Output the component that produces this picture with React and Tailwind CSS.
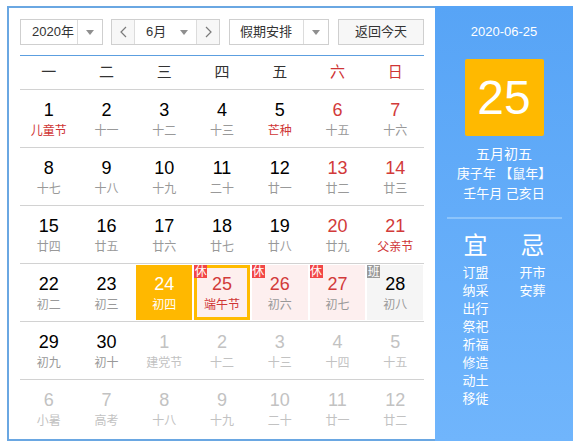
import React from "react";

const FONT = { fontFamily: '"Liberation Sans", Arial, "Noto Sans CJK SC", sans-serif' };

const K = "text-black";
const R = "text-[#d23a3a]";
const G = "text-[#999999]";
const F = "text-[#cf3535]";
const O = "text-[#c2c2c2]";

// each cell: [day, lunar, dayColor, lunarColor, mark]
const rows = [
  [["1", "儿童节", K, F], ["2", "十一", K, G], ["3", "十二", K, G], ["4", "十三", K, G], ["5", "芒种", K, F], ["6", "十五", R, G], ["7", "十六", R, G]],
  [["8", "十七", K, G], ["9", "十八", K, G], ["10", "十九", K, G], ["11", "二十", K, G], ["12", "廿一", K, G], ["13", "廿二", R, G], ["14", "廿三", R, G]],
  [["15", "廿四", K, G], ["16", "廿五", K, G], ["17", "廿六", K, G], ["18", "廿七", K, G], ["19", "廿八", K, G], ["20", "廿九", R, G], ["21", "父亲节", R, F]],
  [["22", "初二", K, G], ["23", "初三", K, G], ["24", "初四", "text-white", "text-white", "sel"], ["25", "端午节", R, F, "today"], ["26", "初六", R, G, "rest"], ["27", "初七", R, G, "rest"], ["28", "初八", K, G, "work"]],
  [["29", "初九", K, G], ["30", "初十", K, G], ["1", "建党节", O, O], ["2", "十二", O, O], ["3", "十三", O, O], ["4", "十四", O, O], ["5", "十五", O, O]],
  [["6", "小暑", O, O], ["7", "高考", O, O], ["8", "十八", O, O], ["9", "十九", O, O], ["10", "二十", O, O], ["11", "廿一", O, O], ["12", "廿二", O, O]],
];

const weekdays = ["一", "二", "三", "四", "五", "六", "日"];
const good = ["订盟", "纳采", "出行", "祭祀", "祈福", "修造", "动土", "移徙"];
const bad = ["开市", "安葬"];

function Caret() {
  return (
    <svg width="8" height="5" viewBox="0 0 8 5">
      <path d="M0 0h8L4 5z" fill="#8f8f8f" />
    </svg>
  );
}

function Chevron({ left }) {
  return (
    <svg width="7" height="12" viewBox="0 0 7 12">
      <path d={left ? "M6 1L1 6l5 5" : "M1 1l5 5-5 5"} fill="none" stroke="#7a7a7a" strokeWidth="1.2" />
    </svg>
  );
}

function Badge({ children, gray }) {
  return (
    <span
      className={`absolute left-px top-px flex h-[13px] w-[13px] items-center justify-center overflow-hidden text-[12px] leading-none text-white ${
        gray ? "bg-[#9a9a9a]" : "bg-[#f24646]"
      }`}
    >
      {children}
    </span>
  );
}

function Cell({ c }) {
  const [day, lunar, dc, lc, mark] = c;
  const text = (
    <>
      <div className={`text-[18px] leading-[22px] ${dc}`}>{day}</div>
      <div className={`text-[12px] leading-[20px] ${lc}`}>{lunar}</div>
    </>
  );
  if (!mark) {
    return <div className="flex h-[57px] flex-col items-center pt-[9px]">{text}</div>;
  }
  let inner = "";
  if (mark === "sel") inner = "bg-[#ffb800] pt-[8px]";
  if (mark === "today") inner = "border-[3px] border-[#ffbb00] bg-[#fdefee] pt-[5px]";
  if (mark === "rest") inner = "bg-[#fdefef] pt-[8px]";
  if (mark === "work") inner = "bg-[#f5f5f5] pt-[8px]";
  return (
    <div className="relative h-[57px] p-px">
      <div className={`flex h-full flex-col items-center ${inner}`}>{text}</div>
      {(mark === "rest" || mark === "today") && <Badge>休</Badge>}
      {mark === "work" && <Badge gray>班</Badge>}
    </div>
  );
}

export default function App() {
  return (
    <div className="bg-white pl-[7px] pt-[6px]" style={FONT}>
      <div className="flex h-[435px] w-[566px]">
        {/* calendar */}
        <div className="w-[428px] border-y-2 border-l-2 border-[#6aa7e2] px-[11px] pt-[11px]">
          <div className="flex h-[26px] items-stretch text-[13px] text-[#333]">
            <div className="flex w-[83px] border border-[#cfcfcf]">
              <div className="flex w-[56px] items-center pl-[11px]">2020年</div>
              <div className="flex flex-1 items-center justify-center border-l border-[#dcdcdc]">
                <Caret />
              </div>
            </div>
            <div className="ml-[8px] flex w-[109px] border border-[#cfcfcf]">
              <div className="flex w-[23px] items-center justify-center border-r border-[#dcdcdc] bg-[#f7f7f7]">
                <Chevron left />
              </div>
              <div className="flex flex-1 items-center justify-between pl-[11px] pr-[8px]">
                <span>6月</span>
                <Caret />
              </div>
              <div className="flex w-[23px] items-center justify-center border-l border-[#dcdcdc] bg-[#f7f7f7]">
                <Chevron />
              </div>
            </div>
            <div className="ml-[9px] flex w-[100px] border border-[#cfcfcf]">
              <div className="flex w-[73px] items-center pl-[10px]">假期安排</div>
              <div className="flex flex-1 items-center justify-center border-l border-[#dcdcdc]">
                <Caret />
              </div>
            </div>
            <div className="ml-[9px] flex w-[86px] items-center justify-center border border-[#cfcfcf] bg-[#f7f7f7]">
              返回今天
            </div>
          </div>

          <div className="mt-[10px] h-px w-[404px] bg-[#5c9fe0]" />

          <div className="grid h-[34px] w-[404px] grid-cols-7 items-center border-b border-[#d2d2d2] text-center text-[15px] text-[#333]">
            {weekdays.map((w, i) => (
              <span key={w} className={i > 4 ? "text-[#cf3535]" : ""}>{w}</span>
            ))}
          </div>

          {rows.map((row, ri) => (
            <div
              key={ri}
              className={`grid w-[404px] grid-cols-7 ${ri < rows.length - 1 ? "border-b border-[#d2d2d2]" : ""}`}
            >
              {row.map((c, ci) => (
                <Cell key={ci} c={c} />
              ))}
            </div>
          ))}
        </div>

        {/* side panel */}
        <div className="flex w-[138px] flex-col items-center bg-linear-to-b from-[#57a4f6] to-[#70b5fc] pt-[16px] text-white">
          <div className="text-[13px] leading-[20px]">2020-06-25</div>
          <div className="mt-[17px] flex h-[77px] w-[79px] items-center justify-center rounded-[2px] bg-[#ffb900] text-[48px] leading-none">
            25
          </div>
          <div className="mt-[8px] text-[14px] leading-[20px]">五月初五</div>
          <div className="text-[13px] leading-[20px]">庚子年 【鼠年】</div>
          <div className="text-[13px] leading-[20px]">壬午月 己亥日</div>
          <div className="mt-[13px] h-[2px] w-[115px] bg-[#8cc4fb]" />
          <div className="mt-[12px] flex gap-[17px]">
            <div className="flex w-[40px] flex-col items-center">
              <div className="text-[24px] leading-[30px]">宜</div>
              <div className="mt-[3px] flex flex-col items-center text-[13px] leading-[18px]">
                {good.map((g) => (
                  <span key={g}>{g}</span>
                ))}
              </div>
            </div>
            <div className="flex w-[40px] flex-col items-center">
              <div className="text-[24px] leading-[30px]">忌</div>
              <div className="mt-[3px] flex flex-col items-center text-[13px] leading-[18px]">
                {bad.map((g) => (
                  <span key={g}>{g}</span>
                ))}
              </div>
            </div>
          </div>
        </div>
      </div>
    </div>
  );
}
